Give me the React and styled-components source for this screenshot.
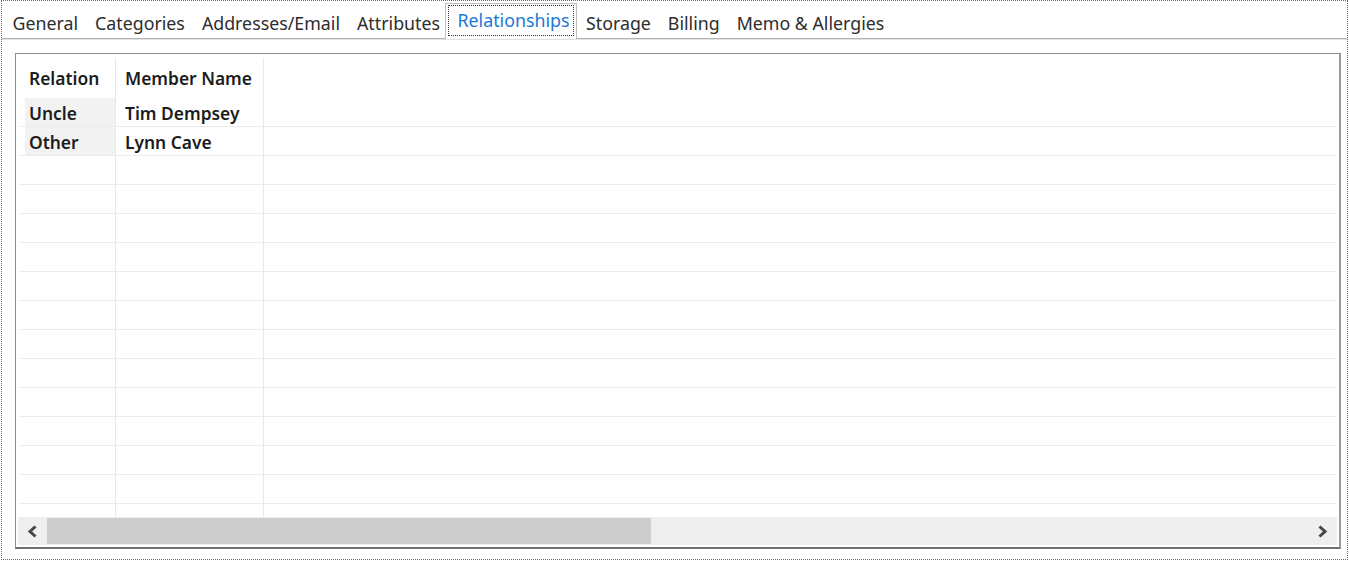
import React from "react";
import styled, { createGlobalStyle } from "styled-components";

const GlobalStyle = createGlobalStyle`
  html, body {
    margin: 0;
    padding: 0;
    background: #ffffff;
  }
  body {
    font-family: "Noto Sans", "Open Sans", sans-serif;
    color: #1e1e1e;
  }
`;

const tabs = [
  "General",
  "Categories",
  "Addresses/Email",
  "Attributes",
  "Relationships",
  "Storage",
  "Billing",
  "Memo & Allergies",
];

const rows = [
  { relation: "Uncle", name: "Tim Dempsey" },
  { relation: "Other", name: "Lynn Cave" },
];

const EMPTY_ROWS = 13;

const Frame = styled.div`
  width: 1345px;
  height: 558px;
  border: 1px dotted #1f74f0;
  margin: 0 0 0 1px;
  display: flex;
  flex-direction: column;
  overflow: hidden;
`;

const TabStrip = styled.div`
  flex: none;
  display: flex;
  align-items: flex-end;
  height: 37px;
  padding-left: 2px;
  border-bottom: 1px solid #b4b4b4;
  box-shadow: 0 1px 0 #e2e2e2;
`;

const Tab = styled.div`
  position: relative;
  height: ${(p) => (p.$active ? "36px" : "30px")};
  padding: ${(p) => (p.$active ? "0 2px 0 2px" : "0 7.5px 1px")};
  margin: ${(p) => (p.$active ? "0 0 -1px -4px" : "0")};
  box-sizing: border-box;
  display: flex;
  align-items: ${(p) => (p.$active ? "flex-start" : "center")};
  font-size: 17.8px;
  white-space: nowrap;
  color: ${(p) => (p.$active ? "#1b78d6" : "#2d2d2d")};
  background: #ffffff;
  border: ${(p) => (p.$active ? "1px solid #bdbdbd" : "1px solid transparent")};
  border-bottom: none;
`;

const FocusBox = styled.span`
  display: flex;
  align-items: center;
  height: 31px;
  padding: 0 4px 2px 9px;
  border: 1px dotted #333;
  box-sizing: border-box;
  margin-top: 1px;
`;

const Page = styled.div`
  flex: 1;
  min-height: 0;
  padding: 14px 6px 10px 13px;
  display: flex;
`;

const GridPanel = styled.div`
  flex: 1;
  min-height: 0;
  display: flex;
  flex-direction: column;
  border: 1px solid #8c8c8c;
  border-bottom: 2px solid #707070;
  border-right: 2px solid #9a9a9a;
  padding: 4px 1px 1px 2px;
  box-sizing: border-box;
  overflow: hidden;
`;

const Rows = styled.div`
  flex: 1;
  min-height: 0;
  overflow: hidden;
  padding-left: 1px;
  padding-right: 2px;
`;

const Row = styled.div`
  display: flex;
  height: ${(p) => (p.$header ? "40px" : "29px")};
  border-bottom: ${(p) => (p.$header ? "none" : "1px solid #ececec")};
  box-sizing: border-box;
  padding-left: 6px;
`;

const Cell = styled.div`
  width: ${(p) => p.$w}px;
  flex: none;
  box-sizing: border-box;
  display: flex;
  align-items: center;
  padding-left: ${(p) => (p.$first ? "4px" : "9px")};
  padding-top: ${(p) => (p.$header ? "0" : "2px")};
  padding-bottom: ${(p) => (p.$header ? "1px" : "0")};
  font-size: 17.4px;
  font-weight: 600;
  color: #1c1c1c;
  background: ${(p) => (p.$shade ? "#f2f2f2" : "transparent")};
  border-right: 1px solid #e8e8e8;
  white-space: nowrap;
`;

const ScrollBar = styled.div`
  height: 28px;
  flex: none;
  display: flex;
  background: #efefef;
  margin-bottom: 1px;
  margin-right: 1px;
`;

const Arrow = styled.div`
  width: 29px;
  flex: none;
  display: flex;
  align-items: center;
  justify-content: center;
`;

const Track = styled.div`
  flex: 1;
  display: flex;
  align-items: stretch;
  padding: 1px 0;
`;

const Thumb = styled.div`
  width: 604px;
  background: #cdcdcd;
`;

function Chevron({ dir }) {
  const d = dir === "left" ? "M8.5 1.5 L3 6.5 L8.5 11.5" : "M2.5 1.5 L8 6.5 L2.5 11.5";
  return (
    <svg width="11" height="13" viewBox="0 0 11 13">
      <path d={d} fill="none" stroke="#474747" strokeWidth="3" />
    </svg>
  );
}

export default function App() {
  return (
    <>
      <GlobalStyle />
      <Frame>
        <TabStrip>
          {tabs.map((t) =>
            t === "Relationships" ? (
              <Tab key={t} $active>
                <FocusBox>{t}</FocusBox>
              </Tab>
            ) : (
              <Tab key={t}>{t}</Tab>
            )
          )}
        </TabStrip>
        <Page>
          <GridPanel>
            <Rows>
              <Row $header>
                <Cell $w={91} $first $header>
                  Relation
                </Cell>
                <Cell $w={148} $header>
                  Member Name
                </Cell>
              </Row>
              {rows.map((r) => (
                <Row key={r.name}>
                  <Cell $w={91} $first $shade>
                    {r.relation}
                  </Cell>
                  <Cell $w={148}>{r.name}</Cell>
                </Row>
              ))}
              {Array.from({ length: EMPTY_ROWS }).map((_, i) => (
                <Row key={i}>
                  <Cell $w={91} $first />
                  <Cell $w={148} />
                </Row>
              ))}
            </Rows>
            <ScrollBar>
              <Arrow>
                <Chevron dir="left" />
              </Arrow>
              <Track>
                <Thumb />
              </Track>
              <Arrow>
                <Chevron dir="right" />
              </Arrow>
            </ScrollBar>
          </GridPanel>
        </Page>
      </Frame>
    </>
  );
}
